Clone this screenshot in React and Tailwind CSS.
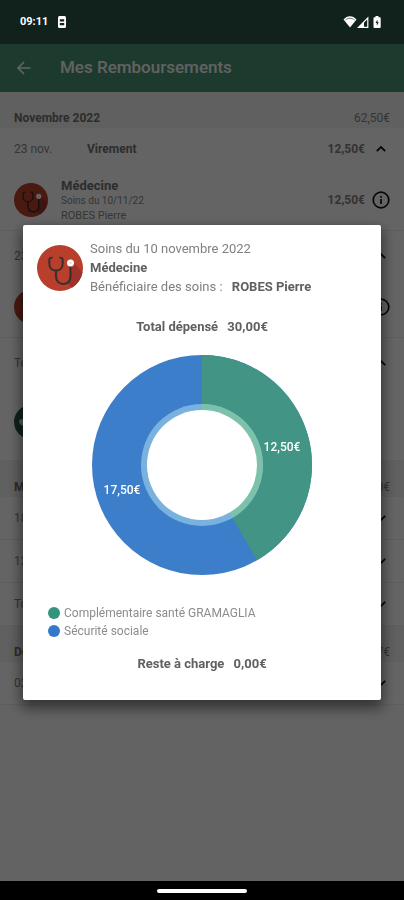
import { useState } from "react"

const months = [
    {
        label: "Novembre 2022",
        total: "62,50€",
        groups: [
            { date: "23 nov.", label: "Virement", amount: "12,50€", open: true, care: { type: "Médecine", date: "Soins du 10/11/22", who: "ROBES Pierre", amount: "12,50€" } },
            { date: "23 nov.", open: true, spaced: true, care: {} },
            { date: "Total", open: true, spaced: true, care: { green: true } }
        ]
    },
    {
        label: "Mars 2022",
        total: "50,00€",
        groups: [
            { date: "18 mars" },
            { date: "12 mars" },
            { date: "Total" }
        ]
    },
    {
        label: "Décembre",
        total: "37,57€",
        groups: [
            { date: "02 déc." }
        ]
    }
]

const StethoscopeIcon = ({ className }) => (
    <svg viewBox="0 0 46 46" className={className} aria-hidden="true">
        <circle cx="23" cy="23" r="23" fill="#b93f2d" />
        <path d="M36 17L45.500 27.500A23 23 0 0 1 35 42.700L30 38L33.500 33Z" fill="#9c322a" />
        <path d="M15.500 12.800C12.800 12.300 12.300 13.500 12.300 15v3.500c0 4 2.600 7 6.700 7s6.700-3 6.700-7V15c0-1.500-.5-2.700-3.200-2.200" fill="none" stroke="#3b2f2d" strokeWidth="2" />
        <path d="M19 25.500v5.500c0 5 3 8 7.200 8s7.300-3 7.300-8V20" fill="none" stroke="#3b2f2d" strokeWidth="2.200" />
        <circle cx="33.500" cy="18" r="3.500" fill="#fff" />
        <circle cx="33.500" cy="18" r="1.200" fill="#f3d9d4" />
    </svg>
)

const PharmacyIcon = ({ className }) => (
    <svg viewBox="0 0 34 34" className={className} aria-hidden="true">
        <circle cx="17" cy="17" r="17" fill="#2a5a45" />
        <path d="M5 15q5-2 6 0v6q-6 0-6-6Z" fill="#e5e5e5" />
    </svg>
)

const Chevron = ({ up }) => (
    <svg viewBox="0 0 18 18" className="size-[18px]" aria-hidden="true">
        <path d={up ? "M4.8 11.2L9 7l4.2 4.2" : "M4.8 6.8L9 11l4.2-4.2"} fill="none" stroke="#111" strokeWidth="1.8" />
    </svg>
)

const InfoIcon = () => (
    <svg viewBox="0 0 18 18" className="size-[18px]" aria-hidden="true">
        <circle cx="9" cy="9" r="7.8" fill="none" stroke="#111" strokeWidth="1.7" />
        <path d="M9 8v5M9 5v1.8" stroke="#111" strokeWidth="1.7" />
    </svg>
)

const StatusBar = () => (
    <div className="relative z-20 flex h-11 items-center bg-[#10221b] px-5 text-white">
        <span className="text-[11px] font-bold">09:11</span>
        <svg viewBox="0 0 8 12" className="ml-2.5 h-3 w-2" aria-hidden="true">
            <rect width="8" height="12" rx="1.5" fill="#fff" />
            <path d="M1.8 3.2h4.4v2.2H1.8zM1.8 7h4.4v2.2H1.8z" fill="#10221b" />
        </svg>
        <svg viewBox="-4 0 42 14" className="ml-auto h-3.5 w-[42px]" aria-hidden="true">
            <path d="M-2.500 4.500C1 0 7 0 10.500 4.500L4 12.500Z" fill="#fff" />
            <path d="M-0.500 4.900C2.300 2.700 5.700 2.700 8.500 4.900" fill="none" stroke="#10221b" strokeWidth="0.6" />
            <path d="M12.500 12.400L21.800 3V12.400Z" fill="none" stroke="#fff" strokeWidth="1.200" />
            <path d="M11.500 13L18 6.500V13Z" fill="#fff" />
            <path d="M29.500 1h3v1.200h1.200q1 0 1 1V12q0 1-1 1h-5.200q-1 0-1-1V3.200q0-1 1-1h1Z" fill="#fff" />
            <path d="M31.500 4.500L29.500 8h1.300v2.800L32.800 7.200h-1.300Z" fill="#10221b" />
        </svg>
    </div>
)

const Group = ({ group, onInfo }) => {
    const { care } = group;
    return (
        <li className={group.spaced ? "border-b border-[#ebebeb] pt-1" : "border-b border-[#ebebeb]"}>
            <button type="button" className="flex h-[42px] w-full items-center px-3.5 text-left text-xs">
                <span className="w-[73px] text-[#858585]">{group.date}</span>
                <span className="font-bold text-[#707070]">{group.label}</span>
                <span className="mr-[7px] ml-auto font-bold text-[#808080]">{group.amount}</span>
                <Chevron up={group.open} />
            </button>
            {care && (
                <div className={care.green ? "flex h-[76px] items-center px-3.5" : "flex h-[60px] items-center px-3.5"}>
                    {care.green ? <PharmacyIcon className="size-[34px]" /> : <StethoscopeIcon className="size-[34px]" />}
                    <div className="ml-[13px] text-[11px] leading-[15px] text-[#858585]">
                        <p className="text-[13px] font-bold text-[#707070]">{care.type}</p>
                        <p className="text-[10px]">{care.date}</p>
                        <p>{care.who}</p>
                    </div>
                    <span className="mr-[7px] ml-auto text-xs font-bold text-[#808080]">{care.amount}</span>
                    {!care.green && (
                        <button type="button" aria-label="Détail du soin" onClick={onInfo}>
                            <InfoIcon />
                        </button>
                    )}
                </div>
            )}
        </li>
    );
};

const Donut = () => (
    <svg viewBox="0 0 220 220" className="mx-auto mt-[18px] size-[220px]" fontSize="12" fontWeight="500" textAnchor="middle">
        <circle cx="110" cy="110" r="110" fill="#3c7ec9" />
        <path d="M110 110V0A110 110 0 0 1 165 205.260Z" fill="#429585" />
        <circle cx="110" cy="110" r="61" fill="#7ab2df" />
        <path d="M110 110V49A61 61 0 0 1 140.500 162.830Z" fill="#7cc2aa" />
        <circle cx="110" cy="110" r="55" fill="#fff" />
        <text x="190" y="96" fill="#fff">12,50€</text>
        <text x="30" y="139" fill="#fff">17,50€</text>
    </svg>
)

const DetailModal = ({ onClose }) => (
    <div className="fixed inset-0 z-10 flex items-center bg-black/60 px-[23px] pt-11 pb-[19px]" onClick={onClose}>
        <div
            role="dialog"
            aria-label="Détail du remboursement"
            className="w-full rounded-xs bg-white px-3.5 pt-3.5 pb-[26px] text-[13px] text-[#606060] shadow-[0_6px_14px_2px_rgba(0,0,0,0.5)]"
            onClick={(e) => e.stopPropagation()}
        >
            <div className="flex items-center">
                <StethoscopeIcon className="size-[46px] shrink-0" />
                <div className="ml-[7px] leading-[19px] text-[#808080]">
                    <p>Soins du 10 novembre 2022</p>
                    <p className="font-bold text-[#606060]">Médecine</p>
                    <p>Bénéficiaire des soins : <b className="ml-1.5 font-bold text-[#606060]">ROBES Pierre</b></p>
                </div>
            </div>
            <p className="mt-[21px] text-center leading-5 font-bold">Total dépensé <span className="ml-1.5">30,00€</span></p>
            <Donut />
            <ul className="mt-[29px] ml-[11px] text-xs leading-[18px] text-[#8c8c8c]">
                <li className="flex items-center gap-1"><span className="size-3 rounded-full bg-[#33937c]"></span>Complémentaire santé GRAMAGLIA</li>
                <li className="flex items-center gap-1"><span className="size-3 rounded-full bg-[#3478cb]"></span>Sécurité sociale</li>
            </ul>
            <p className="mt-3.5 text-center leading-5 font-bold">Reste à charge <span className="ml-1.5">0,00€</span></p>
        </div>
    </div>
)

const App = () => {
    const [showDetail, setShowDetail] = useState(true);

    return (
        <div className="flex min-h-screen flex-col bg-[#f7f7f7] font-[Roboto,sans-serif]">
            <StatusBar />
            <header className="flex h-12 items-center bg-[#489173] px-3.5 text-[#f5f5f5]">
                <button type="button" aria-label="Retour" className="mr-[26px]">
                    <svg viewBox="0 0 20 20" className="size-5" aria-hidden="true">
                        <path d="M16.500 10H4.500M10 4L4 10l6 6" fill="none" stroke="#f5f5f5" strokeWidth="1.7" />
                    </svg>
                </button>
                <h1 className="text-[17px] font-medium">Mes Remboursements</h1>
            </header>
            <main className="flex-1">
                {months.map((month) => (
                    <section key={month.label}>
                        <div className="flex h-9 items-end justify-between bg-[#efefef] px-3.5 pb-0.5 text-xs">
                            <h2 className="font-bold text-[#707070]">{month.label}</h2>
                            <span className="text-[#858585]">{month.total}</span>
                        </div>
                        <ul className="bg-[#fbfbfb]">
                            {month.groups.map((group, i) => (
                                <Group key={i} group={group} onInfo={() => setShowDetail(true)} />
                            ))}
                        </ul>
                    </section>
                ))}
            </main>
            <div className="relative z-20 flex h-[19px] items-center justify-center bg-black">
                <span className="h-1 w-[90px] rounded-full bg-white"></span>
            </div>
            {showDetail && <DetailModal onClose={() => setShowDetail(false)} />}
        </div>
    );
};

export default App;
